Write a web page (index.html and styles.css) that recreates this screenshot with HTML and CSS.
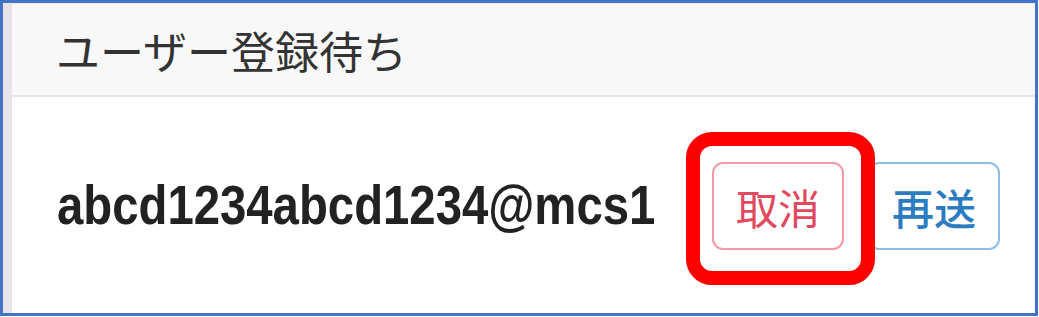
FILE: index.html
```html
<!DOCTYPE html>
<html lang="ja">
<head>
  <meta charset="UTF-8" />
  <title>ユーザー登録待ち</title>
  <link rel="stylesheet" href="styles.css">
</head>
<body>
  <div class="frame">
    <div class="card">
      <div class="card-header">ユーザー登録待ち</div>
      <div class="card-body">
        <div class="user-name"><span class="user-name-text">abcd1234abcd1234@mcs1</span></div>
        <div class="actions">
          <button class="btn btn-cancel">取消<span class="highlight"></span></button>
          <button class="btn btn-resend">再送</button>
        </div>
      </div>
    </div>
  </div>
</body>
</html>
```

FILE: styles.css
```css
* {
  margin: 0;
  padding: 0;
  box-sizing: border-box;
}

body {
  background: #ffffff;
  font-family: "Noto Sans CJK JP", "Noto Sans", sans-serif;
}

.frame {
  width: 1038px;
  height: 316px;
  border: 3px solid #4472c4;
  background: #ffffff;
}

.card {
  height: 100%;
  border-left: 9px solid #e8e4ea;
  display: flex;
  flex-direction: column;
}

.card-header {
  height: 94px;
  padding-left: 44px;
  display: flex;
  align-items: center;
  background: #f8f8f8;
  border-top: 1px solid #ececec;
  border-bottom: 2px solid #e6e6e6;
  font-size: 44px;
  color: #333333;
}

.card-body {
  flex: 1;
  display: flex;
  align-items: center;
  padding: 0 35px 0 45px;
}

.user-name {
  width: 600px;
  white-space: nowrap;
  font-family: "Liberation Sans", Arial, sans-serif;
  font-weight: bold;
  font-size: 55px;
  color: #222222;
}

/* the original face is condensed; squeeze Arial-width glyphs */
.user-name-text {
  display: inline-block;
  transform: scaleX(0.86);
  transform-origin: left center;
}

.actions {
  margin-left: auto;
  flex-shrink: 0;
  display: flex;
  gap: 24px;
  padding-top: 2px;
}

.btn {
  position: relative;
  width: 132px;
  height: 88px;
  background: #ffffff;
  border-radius: 11px;
  font-family: "Noto Sans CJK JP", sans-serif;
  font-size: 42px;
  cursor: pointer;
}

.btn-cancel {
  border: 2px solid #f39aa6;
  color: #e2485e;
}

.btn-resend {
  border: 2px solid #8dbde6;
  color: #2c7cc2;
  font-weight: 500;
}

/* annotation box over the cancel button */
.highlight {
  position: absolute;
  top: -32px;
  left: -28px;
  width: 189px;
  height: 153px;
  border: 14px solid #ff0000;
  border-radius: 26px;
  z-index: 2;
  pointer-events: none;
}
```
